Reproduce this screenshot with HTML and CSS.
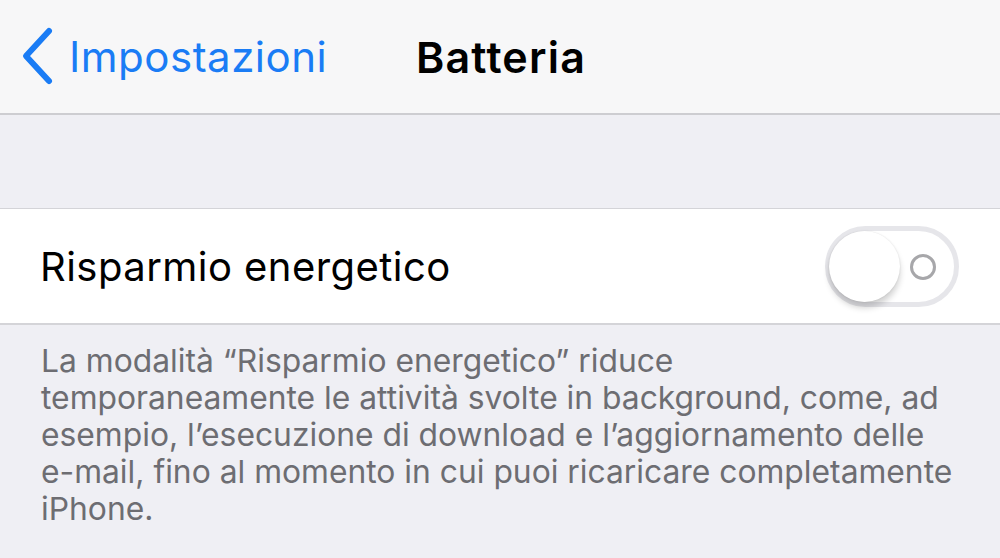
FILE: index.html
```html
<!DOCTYPE html>
<html>
<head>
    <title>Batteria</title>
    <link rel="stylesheet" href="styles.css">
</head>
<body>
    <div class="navbar">
        <a class="back" href="#">
            <svg class="chevron" width="34" height="60" viewBox="0 0 34 60">
                <polyline points="28,5 5,30 28,55" fill="none" stroke="#1a7cf5" stroke-width="6" stroke-linecap="round" stroke-linejoin="round"/>
            </svg>
            <span>Impostazioni</span>
        </a>
        <h1 class="title">Batteria</h1>
    </div>
    <div class="spacer"></div>
    <div class="group">
        <div class="row">
            <span class="label">Risparmio energetico</span>
            <div class="switch">
                <div class="knob"></div>
                <div class="off-mark"></div>
            </div>
        </div>
    </div>
    <p class="footer">La modalità “Risparmio energetico” riduce<br>
        temporaneamente le attività svolte in background, come, ad<br>
        esempio, l’esecuzione di download e l’aggiornamento delle<br>
        e-mail, fino al momento in cui puoi ricaricare completamente<br>
        iPhone.</p>
</body>
</html>
```

FILE: styles.css
```css
body {
    margin: 0;
    background: #efeff4;
    font-family: Inter, "Noto Sans", sans-serif;
    overflow: hidden;
}
.navbar {
    position: relative;
    height: 113px;
    background: #f7f7f8;
    border-bottom: 2px solid #cdcdd1;
    display: flex;
    align-items: center;
    justify-content: center;
}
.back {
    position: absolute;
    left: 21px;
    top: 26px;
    display: flex;
    align-items: center;
    color: #1a7cf5;
    text-decoration: none;
    font-size: 42px;
    letter-spacing: 0.5px;
}
.back span {
    margin-left: 14px;
}
.title {
    margin: 0 0 0 2px;
    font-size: 43px;
    font-weight: 600;
    color: #000;
    letter-spacing: 1.2px;
}
.spacer {
    height: 93px;
}
.group {
    background: #fff;
    border-top: 1px solid #d4d4d8;
    border-bottom: 2px solid #d4d4d8;
}
.row {
    height: 114px;
    display: flex;
    align-items: center;
    justify-content: space-between;
    padding: 0 41px 0 40px;
}
.label {
    font-size: 40px;
    color: #000;
    letter-spacing: 0.45px;
}
.switch {
    position: relative;
    width: 124px;
    height: 71px;
    border: 5px solid #e6e6ea;
    border-radius: 41px;
    background: #fff;
}
.knob {
    position: absolute;
    left: -1px;
    top: 0;
    width: 71px;
    height: 71px;
    border-radius: 50%;
    background: #fff;
    box-shadow: 0 6px 6px rgba(0,0,0,0.18), 0 0 2px rgba(0,0,0,0.12);
}
.off-mark {
    position: absolute;
    right: 18px;
    top: 23px;
    width: 20px;
    height: 20px;
    border: 3px solid #a7a7aa;
    border-radius: 50%;
}
.footer {
    margin: 0;
    padding: 17px 30px 0 41px;
    font-size: 31.8px;
    line-height: 37px;
    color: #6d6d72;
    white-space: nowrap;
}
```
